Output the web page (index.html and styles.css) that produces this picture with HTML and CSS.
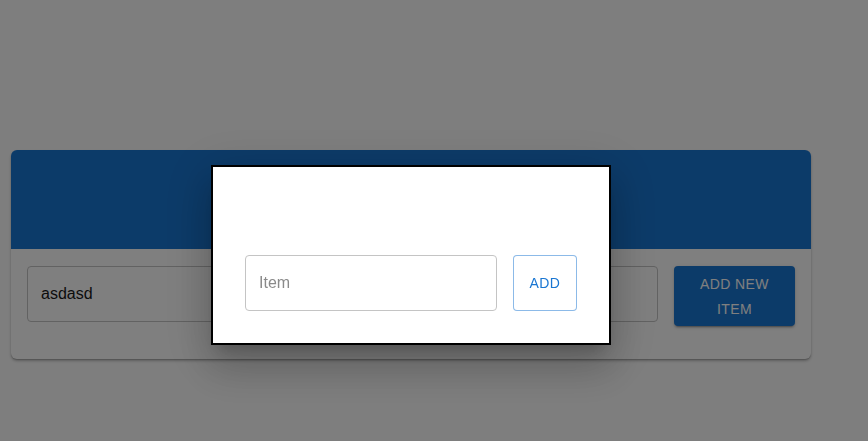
FILE: index.html
```html
<!DOCTYPE html>
<html>
<head>
<meta charset="utf-8">
<link rel="stylesheet" href="styles.css">
</head>
<body>
<main class="page">
  <section class="card">
    <div class="card-header"></div>
    <div class="card-body">
      <div class="field"><span class="field-value">asdasd</span></div>
      <button class="btn-contained">ADD NEW ITEM</button>
    </div>
  </section>
</main>
<div class="backdrop"></div>
<div class="dialog">
  <div class="dialog-row">
    <div class="field dialog-field"><span class="placeholder">Item</span></div>
    <button class="btn-outlined">ADD</button>
  </div>
</div>
</body>
</html>
```
FILE: styles.css
```css
html, body {
  margin: 0;
  padding: 0;
  background: #fdfdfd;
  font-family: "Liberation Sans", Arial, sans-serif;
  width: 868px;
  height: 441px;
  overflow: hidden;
}
.page {
  padding: 150px 0 0 11px;
}
.card {
  width: 800px;
  background: #ffffff;
  border-radius: 6px;
  overflow: hidden;
  box-shadow: 0 2px 3px rgba(0,0,0,0.25), 0 1px 1px rgba(0,0,0,0.14);
}
.card-header {
  height: 99px;
  background: #1976d2;
}
.card-body {
  display: flex;
  align-items: flex-start;
  gap: 16px;
  padding: 17px 16px 33px;
}
.field {
  box-sizing: border-box;
  flex: 1;
  height: 56px;
  border: 1px solid #c4c4c4;
  border-radius: 4px;
  display: flex;
  align-items: center;
  padding: 0 13px;
  font-size: 16px;
  color: #222;
}
.field-value { color: #1a1a1a; }
.btn-contained {
  box-sizing: border-box;
  width: 121px;
  height: 60px;
  border: none;
  border-radius: 4px;
  background: #1976d2;
  color: #fff;
  font-family: "Liberation Sans", Arial, sans-serif;
  font-size: 14px;
  line-height: 25px;
  letter-spacing: 0.4px;
  padding: 6px 16px 4px;
  box-shadow: 0 3px 1px -2px rgba(0,0,0,0.2), 0 2px 2px rgba(0,0,0,0.14), 0 1px 5px rgba(0,0,0,0.12);
}
.backdrop {
  position: fixed;
  inset: 0;
  background: rgba(0,0,0,0.5);
}
.dialog {
  position: fixed;
  left: 211px;
  top: 165px;
  width: 396px;
  height: 176px;
  border: 2px solid #000;
  background: #fff;
  box-shadow: 0 11px 15px -7px rgba(0,0,0,0.2), 0 24px 38px 3px rgba(0,0,0,0.14), 0 9px 46px 8px rgba(0,0,0,0.12);
}
.dialog-row {
  display: flex;
  gap: 16px;
  padding: 88px 31px 0 32px;
}
.dialog-field {
  flex: 0 0 252px;
  height: 56px;
}
.placeholder {
  color: #8a8a8a;
}
.btn-outlined {
  box-sizing: border-box;
  width: 64px;
  height: 56px;
  background: #fff;
  border: 1px solid rgba(25,118,210,0.5);
  border-radius: 4px;
  color: #1976d2;
  font-family: "Liberation Sans", Arial, sans-serif;
  font-size: 14px;
  letter-spacing: 0.4px;
  padding: 0;
}
```
